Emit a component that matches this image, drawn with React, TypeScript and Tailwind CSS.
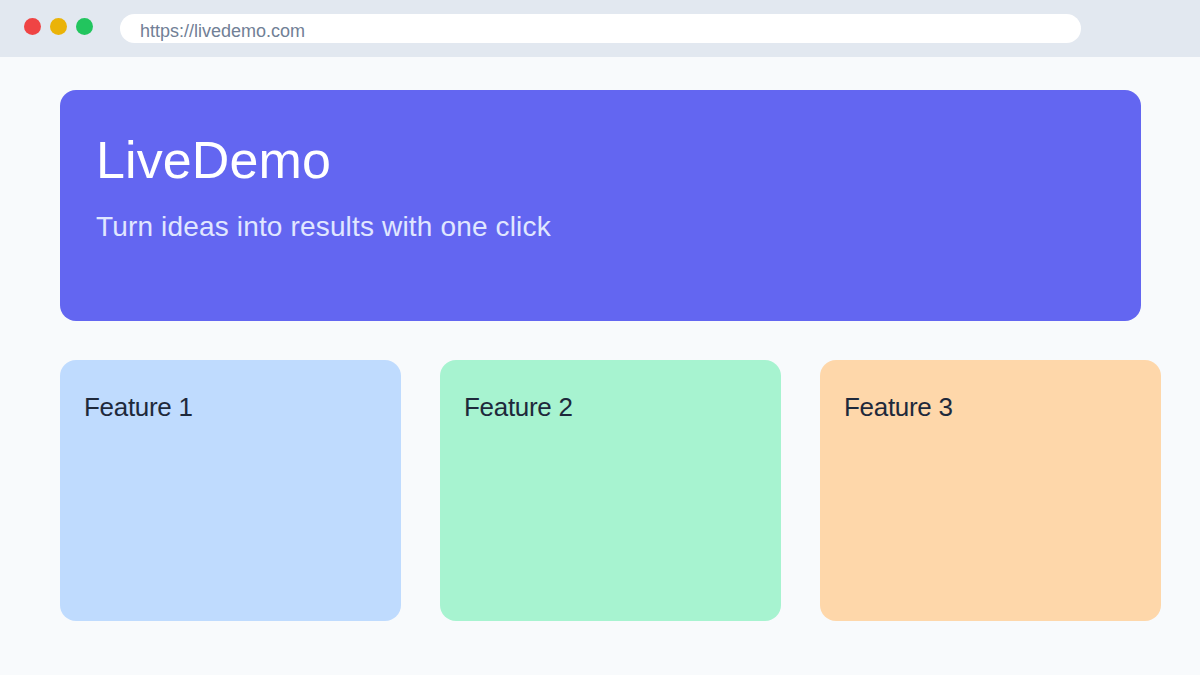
export default function App() {
  const features = [
    { name: "Feature 1", color: "bg-[#bfdbfe]" },
    { name: "Feature 2", color: "bg-[#a7f3d0]" },
    { name: "Feature 3", color: "bg-[#fed7aa]" },
  ];
  return (
    <div className="h-[675px] w-[1200px] overflow-hidden bg-[#f8fafc] font-['Liberation_Sans',Arial,sans-serif]">
      <header className="flex h-[57px] items-start bg-[#e2e8f0]">
        <div className="ml-6 mt-[18px] flex gap-[9px]">
          <span className="h-[17px] w-[17px] rounded-full bg-[#ef4444]" />
          <span className="h-[17px] w-[17px] rounded-full bg-[#eab308]" />
          <span className="h-[17px] w-[17px] rounded-full bg-[#22c55e]" />
        </div>
        <div className="ml-[27px] mt-[14px] h-[29px] w-[961px] rounded-[15px] bg-white pl-5 pt-[6px] text-[18px] leading-[23px] text-[#718096]">
          https://livedemo.com
        </div>
      </header>
      <main className="pl-[60px] pt-[33px]">
        <section className="h-[231px] w-[1081px] rounded-[16px] bg-[#6366f1] pl-9 pt-[36px]">
          <h1 className="text-[52px] leading-[68px] tracking-[0.1px] text-white">LiveDemo</h1>
          <p className="mt-[15px] text-[28px] leading-[36px] tracking-[0.16px] text-[#e0e7ff]">Turn ideas into results with one click</p>
        </section>
        <div className="mt-[39px] flex gap-[39px]">
          {features.map((f) => (
            <div key={f.name} className={`h-[261px] w-[341px] shrink-0 rounded-[16px] pl-6 pt-[31px] text-[26px] leading-[32px] tracking-[-0.3px] text-[#1e293b] ${f.color}`}>
              {f.name}
            </div>
          ))}
        </div>
      </main>
    </div>
  );
}
